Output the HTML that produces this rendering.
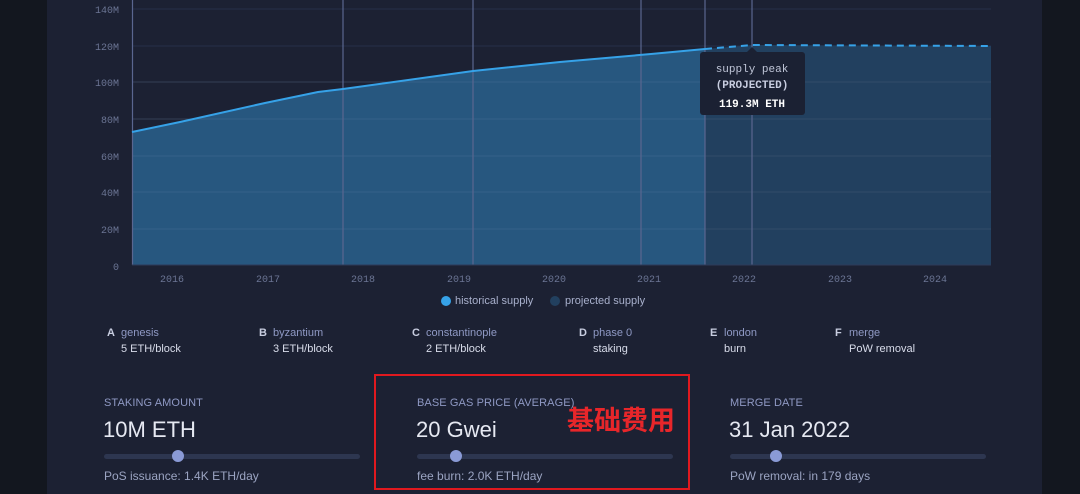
<!DOCTYPE html><html><head><meta charset="utf-8"><style>
body{margin:0;width:1080px;height:494px;overflow:hidden;background:#13171f;font-family:"Liberation Sans",sans-serif;position:relative}
.main{position:absolute;left:47px;top:0;width:995px;height:494px;background:#1c2133}
.t{position:absolute;white-space:nowrap}
.ms{position:absolute;font-size:11px;line-height:16px}
.ms b{position:absolute;left:-14px;color:#c8cde0;font-weight:bold}
.ms .n{color:#8f99c4}.ms .v{color:#d8dcea}
.lab{position:absolute;font-size:11px;color:#8f99c4;letter-spacing:.1px}
.val{position:absolute;font-size:22px;color:#e6e9f2}
.sl{position:absolute;height:5px;width:256px;background:#2d3650;border-radius:3px}
.th{position:absolute;width:12px;height:12px;border-radius:50%;background:#8a9ad6;top:-4px}
.sub{position:absolute;font-size:12px;color:#9ba4c2}
</style></head><body>
<div class="main"></div>
<svg width="1080" height="494" style="position:absolute;left:0;top:0" font-family="Liberation Mono,monospace">
<g stroke="#26304a" stroke-width="1">
<line x1="132" x2="991" y1="9" y2="9"/><line x1="132" x2="991" y1="46" y2="46"/><line x1="132" x2="991" y1="82" y2="82"/><line x1="132" x2="991" y1="119" y2="119"/><line x1="132" x2="991" y1="156" y2="156"/><line x1="132" x2="991" y1="192" y2="192"/><line x1="132" x2="991" y1="229" y2="229"/>
</g>
<polygon fill="#27577f" points="132,132 180,122 265,103 318,92 343,89 473,71 560,62 651,54 705,49 705,265 132,265"/>
<polygon fill="#22405f" points="705,49 752,45 991,46 991,265 705,265"/>
<g stroke="#ffffff" stroke-opacity=".07"><line x1="132" x2="991" y1="82" y2="82"/><line x1="132" x2="991" y1="119" y2="119"/><line x1="132" x2="991" y1="156" y2="156"/><line x1="132" x2="991" y1="192" y2="192"/><line x1="132" x2="991" y1="229" y2="229"/></g>
<g stroke="#5a6690" stroke-width="1.2"><line x1="132.5" x2="132.5" y1="0" y2="265"/><line x1="343" x2="343" y1="0" y2="265"/><line x1="473" x2="473" y1="0" y2="265"/><line x1="641" x2="641" y1="0" y2="265"/><line x1="705" x2="705" y1="0" y2="265"/><line x1="752" x2="752" y1="0" y2="265"/></g>
<line x1="132" x2="991" y1="265" y2="265" stroke="#2e3a58"/>
<polyline fill="none" stroke="#36a2e8" stroke-width="2" points="132,132 180,122 265,103 318,92 343,89 473,71 560,62 651,54 705,49"/>
<polyline fill="none" stroke="#36a2e8" stroke-width="2" stroke-dasharray="7,5" points="705,49 752,45 991,46"/>
<g fill="#6b7594" font-size="10" text-anchor="end"><text x="119" y="13">140M</text><text x="119" y="50">120M</text><text x="119" y="86">100M</text><text x="119" y="123">80M</text><text x="119" y="160">60M</text><text x="119" y="196">40M</text><text x="119" y="233">20M</text><text x="119" y="270">0</text></g>
<g fill="#6b7594" font-size="10" text-anchor="middle"><text x="172" y="282">2016</text><text x="268" y="282">2017</text><text x="363" y="282">2018</text><text x="459" y="282">2019</text><text x="554" y="282">2020</text><text x="649" y="282">2021</text><text x="744" y="282">2022</text><text x="840" y="282">2023</text><text x="935" y="282">2024</text></g>
<rect x="700" y="52" width="105" height="63" rx="3" fill="#1b2133"/>
<polygon points="746,53 752,47 758,53" fill="#1b2133"/>
<g text-anchor="middle" font-size="11"><text x="752" y="72" fill="#c0c6d8">supply peak</text><text x="752" y="88" fill="#c8cde0" font-weight="bold">(PROJECTED)</text><text x="752" y="107" fill="#ffffff" font-weight="bold">119.3M ETH</text></g>
<circle cx="446" cy="301" r="5" fill="#36a2e8"/><circle cx="555" cy="301" r="5" fill="#22405f"/>
<g font-family="Liberation Sans,sans-serif" font-size="11" fill="#a8b0cc"><text x="455" y="304">historical supply</text><text x="565" y="304">projected supply</text></g>
</svg>
<div class="ms" style="left:121px;top:325px"><b>A</b><div class="n">genesis</div><div class="v">5 ETH/block</div></div>
<div class="ms" style="left:273px;top:325px"><b>B</b><div class="n">byzantium</div><div class="v">3 ETH/block</div></div>
<div class="ms" style="left:426px;top:325px"><b>C</b><div class="n">constantinople</div><div class="v">2 ETH/block</div></div>
<div class="ms" style="left:593px;top:325px"><b>D</b><div class="n">phase 0</div><div class="v">staking</div></div>
<div class="ms" style="left:724px;top:325px"><b>E</b><div class="n">london</div><div class="v">burn</div></div>
<div class="ms" style="left:849px;top:325px"><b>F</b><div class="n">merge</div><div class="v">PoW removal</div></div>

<div class="lab" style="left:104px;top:397px">STAKING AMOUNT</div>
<div class="val" style="left:103px;top:417px">10M ETH</div>
<div class="sl" style="left:104px;top:454px"><div class="th" style="left:68px"></div></div>
<div class="sub" style="left:104px;top:469px">PoS issuance: 1.4K ETH/day</div>

<div class="lab" style="left:417px;top:397px">BASE GAS PRICE (AVERAGE)</div>
<div class="val" style="left:416px;top:417px">20 Gwei</div>
<div class="sl" style="left:417px;top:454px"><div class="th" style="left:33px"></div></div>
<div class="sub" style="left:417px;top:469px">fee burn: 2.0K ETH/day</div>

<div class="lab" style="left:730px;top:397px">MERGE DATE</div>
<div class="val" style="left:729px;top:417px">31 Jan 2022</div>
<div class="sl" style="left:730px;top:454px"><div class="th" style="left:40px"></div></div>
<div class="sub" style="left:730px;top:469px">PoW removal: in 179 days</div>

<div style="position:absolute;left:374px;top:374px;width:312px;height:112px;border:2px solid #e0191f"></div>
<div class="t" style="left:567px;top:404px;font-size:27px;font-weight:bold;color:#e8262a;font-family:'Liberation Sans','Noto Sans CJK SC',sans-serif;line-height:34px">基础费用</div>
</body></html>
